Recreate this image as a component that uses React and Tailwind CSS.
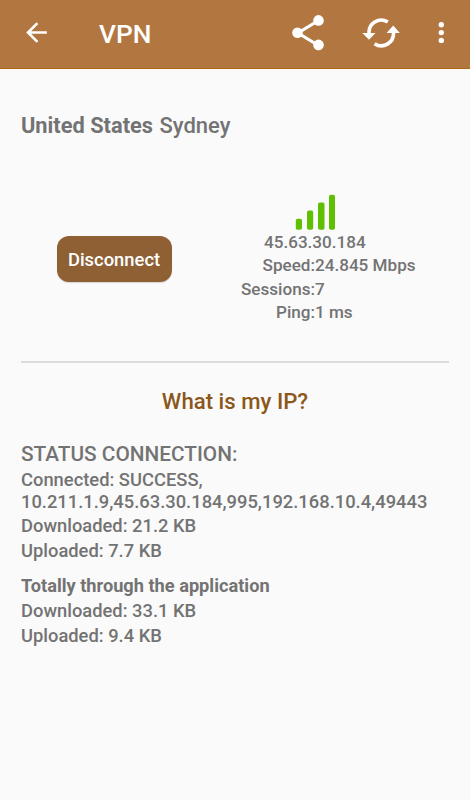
const details = [
  { label: 'Speed:', value: '24.845 Mbps' },
  { label: 'Sessions:', value: '7' },
  { label: 'Ping:', value: '1 ms' },
];

export default function App() {
  return (
    <div className="w-[470px] h-[800px] overflow-hidden bg-[#fafafa] text-[#737373] font-['Roboto',sans-serif] font-medium">
      <Header />

      <main className="px-[21px]">
        <h2 className="pt-[42px] text-[22px] leading-[30px] whitespace-nowrap">
          <span className="font-bold text-[21.8px]">United States</span> <span className="ml-[1px]">Sydney</span>
        </h2>

        <div className="flex mt-[53px] h-[167px]">
          <div className="w-[186px] pt-[42px] flex justify-center items-start">
            <button className="w-[115px] h-[46px] pt-[2px] rounded-[12px] bg-[#8f6034] text-white text-[18.4px] font-medium shadow-[0_1px_1px_rgba(0,0,0,0.15)]">
              Disconnect
            </button>
          </div>

          <div className="flex-1 flex flex-col">
            <SignalBars />
            <p className="-mt-px pl-[57px] text-[17.1px] leading-[24px]">45.63.30.184</p>
            {details.map((x) => (
              <div key={x.label} className="flex text-[17.1px] leading-[23.6px]">
                <span className="w-[108px] text-right">{x.label}</span>
                <span>{x.value}</span>
              </div>
            ))}
          </div>
        </div>

        <hr className="h-[2px] border-0 bg-[#dcdcdc]" />

        <h3 className="mt-[23px] text-center text-[22.2px] leading-[30px] text-[#8b571a]">What is my IP?</h3>

        {/* Connection status */}
        <section className="mt-[22px] text-[18.35px]">
          <h4 className="text-[20.8px] leading-[32px]">STATUS CONNECTION:</h4>
          <p className="-mt-px leading-[21.5px] whitespace-nowrap">
            Connected: SUCCESS,
            <br />
            10.211.1.9,45.63.30.184,995,192.168.10.4,49443
          </p>
          <p className="mt-px leading-[25px]">Downloaded: 21.2 KB</p>
          <p className="leading-[25px]">Uploaded: 7.7 KB</p>
        </section>

        {/* Totals */}
        <section className="mt-[10px] text-[18.35px] leading-[25px]">
          <h4 className="font-bold text-[18.2px]">Totally through the application</h4>
          <p>Downloaded: 33.1 KB</p>
          <p>Uploaded: 9.4 KB</p>
        </section>
      </main>
    </div>
  );
}

function Header() {
  return (
    <header className="flex items-center h-[69px] pb-[3px] bg-[#b27740] border-b border-[#ad6a10] text-white">
      <svg className="ml-[21px] w-[31px] h-[31px]" viewBox="0 0 24 24" fill="currentColor">
        <path d="M20 11H7.83l5.59-5.59L12 4l-8 8 8 8 1.41-1.41L7.83 13H20v-2z" />
      </svg>
      <h1 className="ml-[47px] pt-[2px] flex-1 text-[26.3px] leading-[32px]">VPN</h1>
      {/* Share */}
      <svg className="w-[36px] h-[38px]" viewBox="0 0 36 38" fill="currentColor">
        <path d="M28.5 6.5 8 19l20.5 12.5" fill="none" stroke="currentColor" strokeWidth="3.2" />
        <circle cx="28.5" cy="6.4" r="5.3" />
        <circle cx="7.5" cy="18.7" r="5.3" />
        <circle cx="28.5" cy="30.9" r="5.3" />
      </svg>
      {/* Refresh */}
      <svg className="ml-[36px] w-[38px] h-[30px]" viewBox="0 0 38 30" fill="currentColor">
        <path d="M25.8 4.1A12.2 12.2 0 0 0 7.1 15.8M12.6 25.7A12.2 12.2 0 0 0 31.4 14" fill="none" stroke="currentColor" strokeWidth="3.6" />
        <path d="M.3 14.9h13.2L7 21.8zM24.6 14.9h13.2L31.2 7.6z" />
      </svg>
      {/* Overflow menu */}
      <svg className="ml-[38px] mr-[26px] w-[6px] h-[24px]" viewBox="0 0 6 24" fill="currentColor">
        <circle cx="3.3" cy="3.8" r="2.7" />
        <circle cx="3.3" cy="11.6" r="2.7" />
        <circle cx="3.3" cy="19.4" r="2.7" />
      </svg>
    </header>
  );
}

function SignalBars() {
  return (
    <svg className="ml-[88px] w-[41px] h-[37px]" viewBox="0 0 41 37" fill="#5fc003">
      <rect x="0.8" y="24.8" width="6.2" height="11" rx="1.8" />
      <rect x="12" y="16.6" width="6.2" height="19.2" rx="1.8" />
      <rect x="23" y="8.6" width="6.5" height="27.2" rx="1.8" />
      <rect x="34" y="0.8" width="6" height="35" rx="1.8" />
    </svg>
  );
}
